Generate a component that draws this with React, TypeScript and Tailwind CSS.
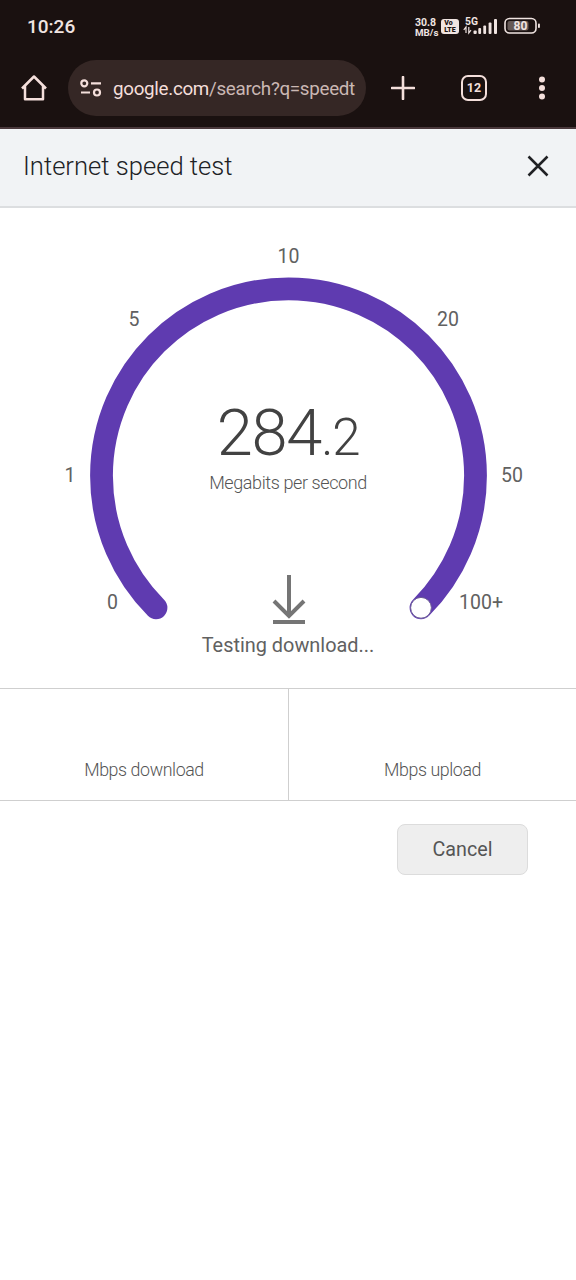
const ticks = [
  { label: '0', x: 112.5, y: 401 },
  { label: '1', x: 70, y: 274 },
  { label: '5', x: 134, y: 118 },
  { label: '10', x: 288.5, y: 54.5 },
  { label: '20', x: 448, y: 118 },
  { label: '50', x: 512, y: 274 },
  { label: '100+', x: 481, y: 401 },
]

function StatusBar() {
  return (
    <div className="flex h-12 items-center justify-between pt-[6px] pr-[35px] pl-[27px] text-[#f0e4e1]">
      <span className="pt-px text-[19px] font-medium">10:26</span>
      <div className="flex items-center">
        <div className="w-[26px] pt-px text-[10.5px] leading-[10px] font-bold whitespace-nowrap">
          <div>30.8</div>
          <div className="text-[9.8px]">MB/s</div>
        </div>
        <div className="-mt-px flex h-[15px] w-[18px] flex-col items-center justify-center rounded-[3px] bg-[#f0e4e1] text-[7px] leading-[6.5px] font-black text-[#1a1110]">
          <span className="-ml-[3px]">Vo</span>
          <span>LTE</span>
        </div>
        {/* 5G signal */}
        <svg width="36" height="20" viewBox="0 0 36 20" className="-mt-[2px] ml-1" fill="currentColor">
          <text x="2" y="8.800" fontSize="10.300" fontWeight="700">5G</text>
          <path d="M3 17v-6L.8 13.800M5.800 11v6L8 14.200" fill="none" stroke="currentColor" strokeWidth="1.200" />
          <rect x="10.500" y="14.500" width="3.200" height="3.500" rx="1" />
          <rect x="15.300" y="12" width="2.800" height="6" rx="1" />
          <rect x="20.300" y="9.500" width="2.800" height="8.500" rx="1" />
          <rect x="25.600" y="6.500" width="2.900" height="11.500" rx="1" />
          <rect x="31" y="3" width="3" height="15" rx="1" />
        </svg>
        {/* Battery */}
        <svg width="37" height="18" viewBox="0 0 37 18" className="-mt-[2px] ml-[5px]">
          <rect x="1" y="1.500" width="31" height="14.500" rx="4.500" fill="none" stroke="#f0e4e1" strokeWidth="1.600" />
          <rect x="3.500" y="4" width="21" height="9.500" rx="2" fill="#655956" />
          <rect x="34" y="6.500" width="1.900" height="4.500" rx=".9" fill="#f0e4e1" />
          <text x="16.500" y="13.200" textAnchor="middle" fontSize="12" fontWeight="700" fill="#f0e4e1">80</text>
        </svg>
      </div>
    </div>
  )
}

function Toolbar() {
  return (
    <div className="flex h-[81px] items-center border-b-2 border-[#49383b] pt-px text-[#f4dfdb]">
      <svg width="28" height="28" viewBox="0 0 28 28" className="ml-5" fill="none" stroke="currentColor" strokeWidth="2.500">
        <path d="M2 14.500 14 2.500l12 12M5 12v13.300h18V12" strokeLinejoin="round" />
      </svg>
      <div className="ml-5 flex h-14 w-[298px] items-center rounded-full bg-[#352725] pr-[11px] pl-3">
        <svg width="22" height="20" viewBox="0 0 22 20" className="shrink-0" fill="none" stroke="currentColor" strokeWidth="2.200">
          <circle cx="4.300" cy="5.300" r="3" />
          <path d="M11 5.300h10M1 14.500h9" />
          <circle cx="17" cy="14.500" r="3" />
        </svg>
        <span className="ml-[11px] w-[243px] pt-[2px] text-[18.8px] tracking-[-0.3px] whitespace-nowrap">
          google.com<span className="text-[#cbb8b4]">/search?q=speedt</span>
        </span>
      </div>
      <svg width="24" height="24" viewBox="0 0 24 24" className="ml-[25px]" fill="none" stroke="currentColor" strokeWidth="2.600">
        <path d="M12 1v22M1 12h22" strokeLinecap="round" />
      </svg>
      <div className="ml-[46px] flex h-[26px] w-[26px] items-center justify-center rounded-[7px] border-[2.5px] border-current pt-px text-[12.5px] font-bold">
        12
      </div>
      <svg width="8" height="26" viewBox="0 0 8 26" className="ml-[51px]" fill="currentColor">
        <circle cx="4" cy="4.500" r="3" />
        <circle cx="4" cy="13" r="3" />
        <circle cx="4" cy="21.500" r="3" />
      </svg>
    </div>
  )
}

function Gauge() {
  return (
    <section className="relative h-[480px]">
      <svg width="576" height="480" viewBox="0 0 576 480" className="block">
        <path
          d="M156 399.800A187 187 0 1 1 421 399.800"
          fill="none"
          stroke="#5f3bb0"
          strokeWidth="22.800"
          strokeLinecap="round"
        />
        <circle cx="421" cy="399.800" r="10.400" fill="#fff" stroke="#6c5c96" strokeWidth="1" />
        {ticks.map((t) => (
          <text key={t.label} x={t.x} y={t.y} textAnchor="middle" fontSize="19.500" fill="#616161">
            {t.label}
          </text>
        ))}
      </svg>
      <div className="absolute inset-0 flex flex-col items-center pt-[187px]">
        <div className="text-[65px] leading-[76px] font-light tracking-[-1.2px] text-[#424242]">
          284<span className="text-[51px]">.2</span>
        </div>
        <div className="-mt-[5px] text-[18px] leading-6 font-light tracking-[-0.4px] text-[#555]">Megabits per second</div>
        <svg width="34" height="50" viewBox="0 0 34 50" className="mt-[80px] ml-[2px]" fill="none" stroke="#757575" strokeWidth="4">
          <path d="M17 0v40M2 26l15 15 15-15M1 47h32" />
        </svg>
        <div className="mt-[9px] text-[19.9px] leading-6 text-[#616161]">Testing download...</div>
      </div>
    </section>
  )
}

export default function App() {
  return (
    <div className="min-h-[1280px] w-[576px] bg-white font-['Roboto',sans-serif]">
      <header className="bg-[#1a1110]">
        <StatusBar />
        <Toolbar />
      </header>

      <div className="flex h-[79px] items-center justify-between border-b-2 border-[#dcdee0] bg-[#f1f3f5] pr-[27px] pb-[3px] pl-[23px] text-[#202124]">
        <h1 className="text-[25.6px] font-light">Internet speed test</h1>
        <svg width="22" height="22" viewBox="0 0 22 22" fill="none" stroke="currentColor" strokeWidth="2.500">
          <path d="m1.500 1.500 19 19M20.500 1.500l-19 19" />
        </svg>
      </div>

      <Gauge />

      <div className="grid h-[113px] grid-cols-[289px_287px] border-y border-[#cfcfcf] text-center text-[17.8px] font-light tracking-[-0.4px] text-[#555]">
        <div className="border-r border-[#cfcfcf] pt-[68px]">Mbps download</div>
        <div className="pt-[68px]">Mbps upload</div>
      </div>

      <div className="flex justify-end pt-[23px] pr-12">
        <button className="h-[51px] w-[131px] rounded-lg border border-[#dcdcdc] bg-[#eeeeee] text-[19.7px] text-[#555]">
          Cancel
        </button>
      </div>
    </div>
  )
}
